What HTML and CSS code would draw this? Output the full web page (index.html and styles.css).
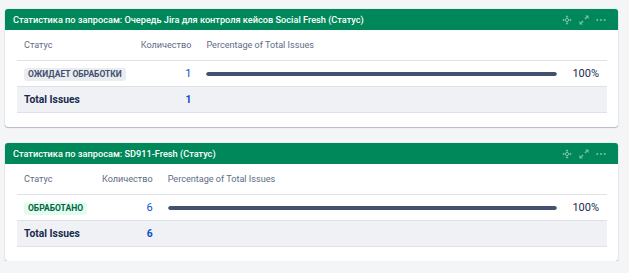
FILE: index.html
```html
<!DOCTYPE html>
<html lang="ru">
<head>
<meta charset="utf-8">
<link rel="stylesheet" href="styles.css">
</head>
<body>
<div class="page">
  <section class="card">
    <header class="card-head">
      <span class="title">Статистика по запросам: Очередь Jira для контроля кейсов Social Fresh (Статус)</span>
      <span class="tools">
        <svg class="ico" viewBox="0 0 10 10" width="10" height="10"><path d="M5 0.3 L3.4 2 H4.5 V3.2 H5.5 V2 H6.6 Z M5 9.7 L3.4 8 H4.5 V6.8 H5.5 V8 H6.6 Z M0.3 5 L2 3.4 V4.5 H3.2 V5.5 H2 V6.6 Z M9.7 5 L8 3.4 V4.5 H6.8 V5.5 H8 V6.6 Z" fill="currentColor"/><circle cx="5" cy="5" r="1.6" fill="none" stroke="currentColor" stroke-width="1"/></svg>
        <svg class="ico" viewBox="0 0 10 10" width="10" height="10"><path d="M9.6 0.4 H6 L7.3 1.7 L5.4 3.6 L6.4 4.6 L8.3 2.7 L9.6 4 Z M0.4 9.6 H4 L2.7 8.3 L4.6 6.4 L3.6 5.4 L1.7 7.3 L0.4 6 Z" fill="currentColor"/></svg>
        <svg class="ico dots" viewBox="0 0 10 4" width="10" height="4"><circle cx="1.3" cy="2" r="1.1" fill="currentColor"/><circle cx="5" cy="2" r="1.1" fill="currentColor"/><circle cx="8.7" cy="2" r="1.1" fill="currentColor"/></svg>
      </span>
    </header>
    <div class="card-body">
      <table class="stats">
        <thead>
          <tr><th class="c-status">Статус</th><th class="c-count">Количество</th><th class="c-bar">Percentage of Total Issues</th><th class="c-pct"></th></tr>
        </thead>
        <tbody>
          <tr class="row"><td class="c-status"><span class="lozenge grey">Ожидает обработки</span></td><td class="c-count num">1</td><td class="c-bar"><div class="bar"><div class="fill" style="width:100%"></div></div></td><td class="c-pct">100%</td></tr>
          <tr class="total"><td class="c-status">Total Issues</td><td class="c-count num">1</td><td class="c-bar"></td><td class="c-pct"></td></tr>
        </tbody>
      </table>
    </div>
  </section>

  <section class="card">
    <header class="card-head">
      <span class="title">Статистика по запросам: SD911-Fresh (Статус)</span>
      <span class="tools">
        <svg class="ico" viewBox="0 0 10 10" width="10" height="10"><path d="M5 0.3 L3.4 2 H4.5 V3.2 H5.5 V2 H6.6 Z M5 9.7 L3.4 8 H4.5 V6.8 H5.5 V8 H6.6 Z M0.3 5 L2 3.4 V4.5 H3.2 V5.5 H2 V6.6 Z M9.7 5 L8 3.4 V4.5 H6.8 V5.5 H8 V6.6 Z" fill="currentColor"/><circle cx="5" cy="5" r="1.6" fill="none" stroke="currentColor" stroke-width="1"/></svg>
        <svg class="ico" viewBox="0 0 10 10" width="10" height="10"><path d="M9.6 0.4 H6 L7.3 1.7 L5.4 3.6 L6.4 4.6 L8.3 2.7 L9.6 4 Z M0.4 9.6 H4 L2.7 8.3 L4.6 6.4 L3.6 5.4 L1.7 7.3 L0.4 6 Z" fill="currentColor"/></svg>
        <svg class="ico dots" viewBox="0 0 10 4" width="10" height="4"><circle cx="1.3" cy="2" r="1.1" fill="currentColor"/><circle cx="5" cy="2" r="1.1" fill="currentColor"/><circle cx="8.7" cy="2" r="1.1" fill="currentColor"/></svg>
      </span>
    </header>
    <div class="card-body">
      <table class="stats">
        <thead>
          <tr><th class="c-status">Статус</th><th class="c-count">Количество</th><th class="c-bar">Percentage of Total Issues</th><th class="c-pct"></th></tr>
        </thead>
        <tbody>
          <tr class="row"><td class="c-status"><span class="lozenge green">Обработано</span></td><td class="c-count num">6</td><td class="c-bar"><div class="bar"><div class="fill" style="width:100%"></div></div></td><td class="c-pct">100%</td></tr>
          <tr class="total"><td class="c-status">Total Issues</td><td class="c-count num">6</td><td class="c-bar"></td><td class="c-pct"></td></tr>
        </tbody>
      </table>
    </div>
  </section>
</div>
</body>
</html>
```

FILE: styles.css
```css
html, body {
  margin: 0;
  padding: 0;
  background: #f4f5f7;
}
body {
  font-family: Roboto, "Open Sans", "Liberation Sans", sans-serif;
  color: #172b4d;
}
.page {
  display: flex;
  flex-direction: column;
  gap: 16px;
  padding: 9px 11px 0 5px;
}
.card {
  background: #fff;
  border-radius: 3px;
  box-shadow: 0 1px 1px rgba(9, 30, 66, 0.25), 0 0 1px rgba(9, 30, 66, 0.31);
}
.card-head {
  height: 21px;
  background: #00875a;
  border-radius: 3px 3px 0 0;
  display: flex;
  align-items: center;
  justify-content: space-between;
  padding: 0 12px 0 8px;
}
.title {
  color: #fff;
  font-weight: 500;
  font-size: 9.2px;
  white-space: nowrap;
}
.tools {
  display: flex;
  align-items: center;
  gap: 7px;
  color: rgba(255, 255, 255, 0.45);
}
.ico { display: block; }
.card-body {
  padding: 0 11px 14px 12px;
}
.stats {
  width: 100%;
  border-collapse: collapse;
}
.stats th {
  height: 30px;
  font-weight: 400;
  font-size: 9.1px;
  color: #5e6c84;
  text-align: left;
  padding: 0 8px 0 7px;
  border-bottom: 1px solid #dfe1e6;
  white-space: nowrap;
}
.stats td {
  padding: 0 8px 0 7px;
  white-space: nowrap;
  font-size: 11px;
}
.stats .c-count { text-align: right; }
.stats th.c-count { text-align: left; }
.stats .c-bar { width: 100%; }
.stats .c-pct { text-align: right; color: #172b4d; }
.row td {
  height: 25px;
  border-bottom: 1px solid #dfe1e6;
}
.total td {
  height: 25px;
  background: #f0f1f4;
  border-bottom: 1px solid #dfe1e6;
  font-weight: 700;
  font-size: 10.3px;
}
.num { color: #0052cc; }
.lozenge {
  display: inline-block;
  font-size: 8.5px;
  font-weight: 700;
  text-transform: uppercase;
  line-height: 13px;
  padding: 0 4px;
  border-radius: 3px;
}
.lozenge.grey { background: #ebecf0; color: #42526e; }
.lozenge.green { background: #e3fcef; color: #006644; }
.bar {
  height: 4px;
  border-radius: 2px;
  overflow: hidden;
}
.fill {
  height: 100%;
  background: #42526e;
  border-radius: 2px;
}
```
